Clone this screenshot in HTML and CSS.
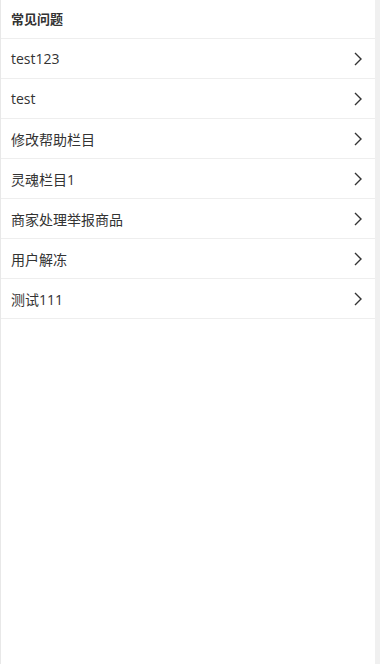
FILE: index.html
```html
<!DOCTYPE html>
<html lang="zh-CN">
<head>
    <meta charset="utf-8">
    <title>常见问题</title>
    <link rel="stylesheet" href="styles.css">
</head>
<body>

<div class="page">
    <div class="title">常见问题</div>
    <ul class="list">
        <li class="item"><span>test123</span><svg class="arrow" viewBox="0 0 8 14"><path d="M1 1l6 6-6 6" fill="none" stroke="#333" stroke-width="1.4"/></svg></li>
        <li class="item"><span>test</span><svg class="arrow" viewBox="0 0 8 14"><path d="M1 1l6 6-6 6" fill="none" stroke="#333" stroke-width="1.4"/></svg></li>
        <li class="item"><span>修改帮助栏目</span><svg class="arrow" viewBox="0 0 8 14"><path d="M1 1l6 6-6 6" fill="none" stroke="#333" stroke-width="1.4"/></svg></li>
        <li class="item"><span>灵魂栏目1</span><svg class="arrow" viewBox="0 0 8 14"><path d="M1 1l6 6-6 6" fill="none" stroke="#333" stroke-width="1.4"/></svg></li>
        <li class="item"><span>商家处理举报商品</span><svg class="arrow" viewBox="0 0 8 14"><path d="M1 1l6 6-6 6" fill="none" stroke="#333" stroke-width="1.4"/></svg></li>
        <li class="item"><span>用户解冻</span><svg class="arrow" viewBox="0 0 8 14"><path d="M1 1l6 6-6 6" fill="none" stroke="#333" stroke-width="1.4"/></svg></li>
        <li class="item"><span>测试111</span><svg class="arrow" viewBox="0 0 8 14"><path d="M1 1l6 6-6 6" fill="none" stroke="#333" stroke-width="1.4"/></svg></li>
    </ul>
</div>

</body>
</html>
```
FILE: styles.css
```css
html, body { margin: 0; padding: 0; height: 100%; }
body { font-family: "Open Sans", "Noto Sans CJK SC", sans-serif; color: #333; background: #f0f0f0; }
.page { width: 375px; height: 664px; background: #fff; border-left: 1px solid #e8e8e8; box-sizing: border-box; }
.title { height: 38px; line-height: 38px; padding-left: 10px; font-size: 13px; font-weight: bold; color: #333; border-bottom: 1px solid #eee; }
.list { list-style: none; margin: 0; padding: 0; }
.item { display: flex; align-items: center; justify-content: space-between; height: 39px; padding: 0 13px 0 10px; font-size: 14px; color: #333; border-bottom: 1px solid #eee; }
.arrow { width: 8px; height: 14px; }
```
